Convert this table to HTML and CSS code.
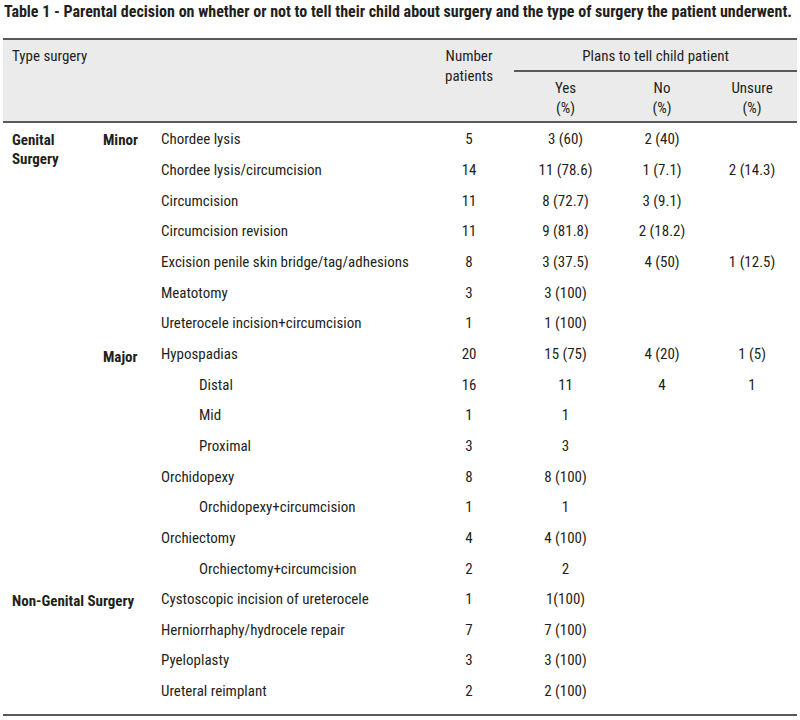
FILE: index.html
```html
<!DOCTYPE html>
<html lang="en">
<head>
<meta charset="utf-8">
<title>Table 1</title>
<link rel="stylesheet" href="styles.css">
</head>
<body>
<h1 class="caption">Table 1 - Parental decision on whether or not to tell their child about surgery and the type of surgery the patient underwent.</h1>
<table class="data">
  <colgroup>
    <col class="c-group">
    <col class="c-sub">
    <col class="c-type">
    <col class="c-num">
    <col class="c-yes">
    <col class="c-no">
    <col class="c-unsure">
  </colgroup>
  <thead>
    <tr class="h1">
      <th colspan="3" rowspan="2" class="left">Type surgery</th>
      <th rowspan="2">Number<br>patients</th>
      <th colspan="3" class="plans">Plans to tell child patient</th>
    </tr>
    <tr class="h2">
      <th>Yes<br>(%)</th>
      <th>No<br>(%)</th>
      <th>Unsure<br>(%)</th>
    </tr>
  </thead>
  <tbody>
    <tr class="first">
      <td rowspan="15" class="grp">Genital Surgery</td>
      <td rowspan="7" class="sub">Minor</td>
      <td class="type">Chordee lysis</td><td>5</td><td>3 (60)</td><td>2 (40)</td><td></td>
    </tr>
    <tr><td class="type">Chordee lysis/circumcision</td><td>14</td><td>11 (78.6)</td><td>1 (7.1)</td><td>2 (14.3)</td></tr>
    <tr><td class="type">Circumcision</td><td>11</td><td>8 (72.7)</td><td>3 (9.1)</td><td></td></tr>
    <tr><td class="type">Circumcision revision</td><td>11</td><td>9 (81.8)</td><td>2 (18.2)</td><td></td></tr>
    <tr><td class="type">Excision penile skin bridge/tag/adhesions</td><td>8</td><td>3 (37.5)</td><td>4 (50)</td><td>1 (12.5)</td></tr>
    <tr><td class="type">Meatotomy</td><td>3</td><td>3 (100)</td><td></td><td></td></tr>
    <tr><td class="type">Ureterocele incision+circumcision</td><td>1</td><td>1 (100)</td><td></td><td></td></tr>
    <tr>
      <td rowspan="8" class="sub major">Major</td>
      <td class="type">Hypospadias</td><td>20</td><td>15 (75)</td><td>4 (20)</td><td>1 (5)</td>
    </tr>
    <tr><td class="type indent">Distal</td><td>16</td><td>11</td><td>4</td><td>1</td></tr>
    <tr><td class="type indent">Mid</td><td>1</td><td>1</td><td></td><td></td></tr>
    <tr><td class="type indent">Proximal</td><td>3</td><td>3</td><td></td><td></td></tr>
    <tr><td class="type">Orchidopexy</td><td>8</td><td>8 (100)</td><td></td><td></td></tr>
    <tr><td class="type indent">Orchidopexy+circumcision</td><td>1</td><td>1</td><td></td><td></td></tr>
    <tr><td class="type">Orchiectomy</td><td>4</td><td>4 (100)</td><td></td><td></td></tr>
    <tr><td class="type indent">Orchiectomy+circumcision</td><td>2</td><td>2</td><td></td><td></td></tr>
    <tr>
      <td rowspan="4" colspan="2" class="grp one-line">Non-Genital Surgery</td>
      <td class="type">Cystoscopic incision of ureterocele</td><td>1</td><td>1(100)</td><td></td><td></td>
    </tr>
    <tr><td class="type">Herniorrhaphy/hydrocele repair</td><td>7</td><td>7 (100)</td><td></td><td></td></tr>
    <tr><td class="type">Pyeloplasty</td><td>3</td><td>3 (100)</td><td></td><td></td></tr>
    <tr class="last"><td class="type">Ureteral reimplant</td><td>2</td><td>2 (100)</td><td></td><td></td></tr>
  </tbody>
</table>
</body>
</html>
```
FILE: styles.css
```css
html, body {
  margin: 0;
  padding: 0;
  background: #ffffff;
}
body {
  font-family: "Roboto Condensed", "Liberation Sans Narrow", "Liberation Sans", sans-serif;
  color: #231f20;
}
.caption {
  margin: 0;
  padding: 3px 0 0 4px;
  font-size: 16px;
  line-height: 18px;
  font-weight: bold;
  white-space: nowrap;
  height: 38px;
  box-sizing: border-box;
}
.data {
  margin-left: 3px;
  width: 794px;
  border-collapse: collapse;
  table-layout: fixed;
  font-size: 15px;
}
.c-group { width: 91px; }
.c-sub { width: 58px; }
.c-type { width: 272px; }
.c-num { width: 90px; }
.c-yes { width: 103px; }
.c-no { width: 90px; }
.c-unsure { width: 90px; }

.data thead {
  background: #ebebec;
  border-bottom: 2px solid #58595b;
}
.data tbody {
  border-bottom: 2px solid #58595b;
}
.data th {
  font-weight: normal;
  text-align: center;
  vertical-align: top;
  line-height: 20px;
  padding: 0 9px;
}
.data tr.h1 th {
  border-top: 2px solid #58595b;
  padding-top: 6px;
}
.data th.left {
  text-align: left;
}
.data tr.h1 th.plans {
  height: 32px;
  box-sizing: border-box;
  border-bottom: 2px solid #58595b;
}
.data tr.h2 th {
  padding-top: 6px;
  padding-bottom: 3px;
}
.data td {
  padding: 0 9px;
  height: 30.67px;
  line-height: 18px;
  text-align: center;
  vertical-align: middle;
  white-space: nowrap;
}
.data td.type {
  text-align: left;
}
.data td.indent {
  padding-left: 47px;
}
.data td.grp,
.data td.sub {
  text-align: left;
  vertical-align: top;
  font-weight: bold;
  white-space: normal;
  line-height: 19px;
  padding-top: 8px;
}
.data td.sub.major {
  padding-top: 9px;
}
.data td.one-line {
  white-space: nowrap;
}
.data tr.first td {
  padding-top: 1px;
}
.data tr.first td.grp,
.data tr.first td.sub {
  padding-top: 8px;
}
.data tr.last td {
  padding-bottom: 8px;
}
```
